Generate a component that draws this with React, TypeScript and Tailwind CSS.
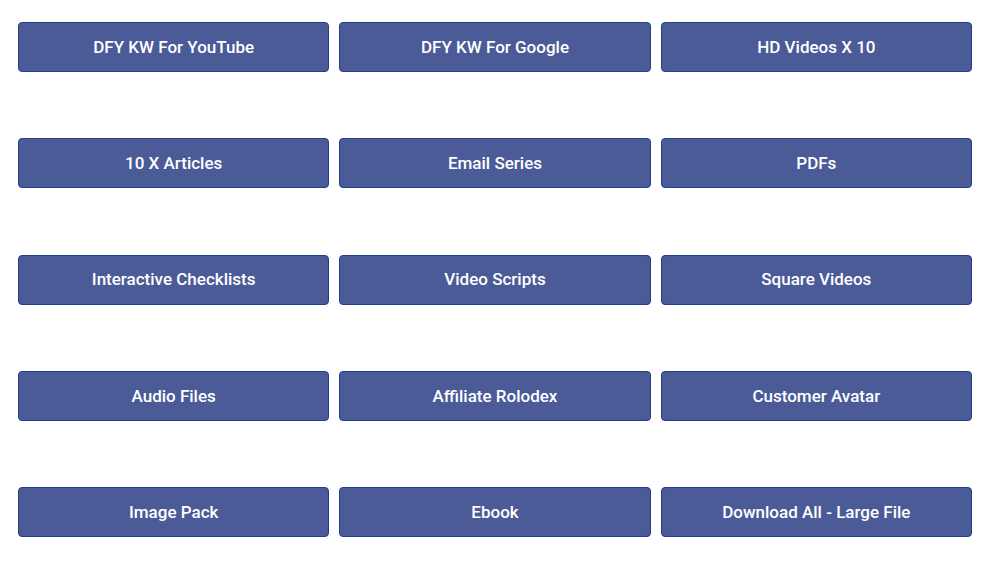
const items = [
  'DFY KW For YouTube',
  'DFY KW For Google',
  'HD Videos X 10',
  '10 X Articles',
  'Email Series',
  'PDFs',
  'Interactive Checklists',
  'Video Scripts',
  'Square Videos',
  'Audio Files',
  'Affiliate Rolodex',
  'Customer Avatar',
  'Image Pack',
  'Ebook',
  'Download All - Large File',
];

export default function App() {
  return (
    <div className="min-h-screen bg-white pl-[18px] pr-[17px] pt-[22px]" style={{ fontFamily: 'Roboto, sans-serif' }}>
      <div className="grid grid-cols-3 gap-x-[10px] gap-y-[66.25px]">
        {items.map((label) => (
          <button
            key={label}
            className="h-[50px] rounded-[4px] border border-[#233f8c] bg-[#4a5b98] pt-px text-[17px] font-medium text-white"
          >
            {label}
          </button>
        ))}
      </div>
    </div>
  );
}
